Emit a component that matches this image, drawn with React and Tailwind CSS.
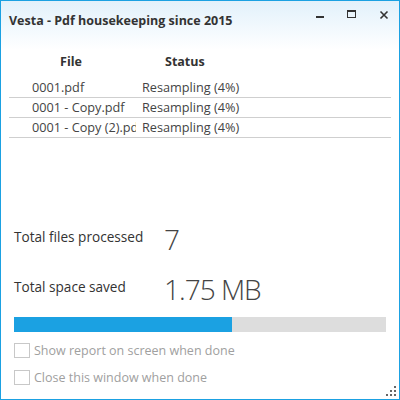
import React from "react";

const rows = [
  { file: "0001.pdf", status: "Resampling (4%)" },
  { file: "0001 - Copy.pdf", status: "Resampling (4%)" },
  { file: "0001 - Copy (2).pdf", status: "Resampling (4%)" },
];

function Checkbox({ label }) {
  return (
    <div className="flex items-center gap-[4px] h-[15px]">
      <div className="w-[16px] h-[15px] border border-[#c8c8c8] bg-white" />
      <span className="text-[12.5px] text-[#a0a0a0] pt-[2px]">{label}</span>
    </div>
  );
}

export default function App() {
  return (
    <div
      className="w-[400px] h-[400px] border border-[#1ba1e2] bg-white flex flex-col relative overflow-hidden text-[#333]"
      style={{ fontFamily: '"Open Sans", "Noto Sans", sans-serif' }}
    >
      {/* Title bar */}
      <div className="h-[49px] bg-gradient-to-b from-[#e2f1fb] to-white flex items-start">
        <div className="pl-[8px] pt-[11px] text-[12.5px] font-bold text-[#333] flex-1">
          Vesta - Pdf housekeeping since 2015
        </div>
        <div className="flex items-start pt-[9px] pr-[10px] gap-[22px] text-[#333]">
          <svg width="10" height="10" viewBox="0 0 10 10">
            <rect x="1" y="6" width="8" height="2" fill="#333" />
          </svg>
          <svg width="10" height="10" viewBox="0 0 10 10">
            <rect x="0.5" y="0.5" width="8" height="7" fill="none" stroke="#333" />
            <rect x="0.5" y="0.5" width="8" height="1.5" fill="#333" />
          </svg>
          <svg width="10" height="10" viewBox="0 0 10 10">
            <path d="M1.5 1.5 L8.5 8.5 M8.5 1.5 L1.5 8.5" stroke="#333" strokeWidth="1.6" />
          </svg>
        </div>
      </div>

      {/* File list */}
      <div className="px-[8px]">
        <div className="flex h-[24px] items-center text-[12.5px] font-bold text-[#333]">
          <div className="w-[124px] text-center">File</div>
          <div className="pl-[32px]">Status</div>
        </div>
        <div className="mt-[4px]">
          {rows.map((r, i) => (
            <div key={i} className="flex h-[20px] items-center border-b border-[#cfcfcf] text-[12.7px] text-[#444] pt-[1px]">
              <div className="w-[132px] pl-[23px] shrink-0">
                <div className="w-[104px] whitespace-nowrap overflow-hidden">{r.file}</div>
              </div>
              <div className="pl-[1px] whitespace-nowrap">{r.status}</div>
            </div>
          ))}
        </div>
      </div>

      <div className="flex-1" />

      {/* Totals */}
      <div className="px-[13px] pb-[14px] flex flex-col">
        <div className="flex items-center h-[32px]">
          <div className="w-[150px] text-[13.6px] text-[#333] -mt-[3px]">Total files processed</div>
          <div className="text-[28px] font-light text-[#444] leading-none -mt-[1px]">7</div>
        </div>
        <div className="flex items-center h-[32px] mt-[18px]">
          <div className="w-[150px] text-[13.6px] text-[#333] -mt-[3px]">Total space saved</div>
          <div className="text-[28px] font-light text-[#444] leading-none tracking-[-1px] -mt-[1px]">1.75 MB</div>
        </div>
        <div className="mt-[12px] h-[15px] bg-[#dddddd] flex">
          <div className="h-full bg-[#1ba1e2]" style={{ width: "58.6%" }} />
        </div>
        <div className="mt-[11px] flex flex-col gap-[12px]">
          <Checkbox label="Show report on screen when done" />
          <Checkbox label="Close this window when done" />
        </div>
      </div>

      {/* Resize grip */}
      <svg className="absolute right-[1px] bottom-[1px]" width="12" height="12" viewBox="0 0 12 12">
        <rect x="8" y="0" width="2" height="2" fill="#666" />
        <rect x="4" y="4" width="2" height="2" fill="#666" />
        <rect x="8" y="4" width="2" height="2" fill="#666" />
        <rect x="0" y="8" width="2" height="2" fill="#666" />
        <rect x="4" y="8" width="2" height="2" fill="#666" />
        <rect x="8" y="8" width="2" height="2" fill="#666" />
      </svg>
    </div>
  );
}
